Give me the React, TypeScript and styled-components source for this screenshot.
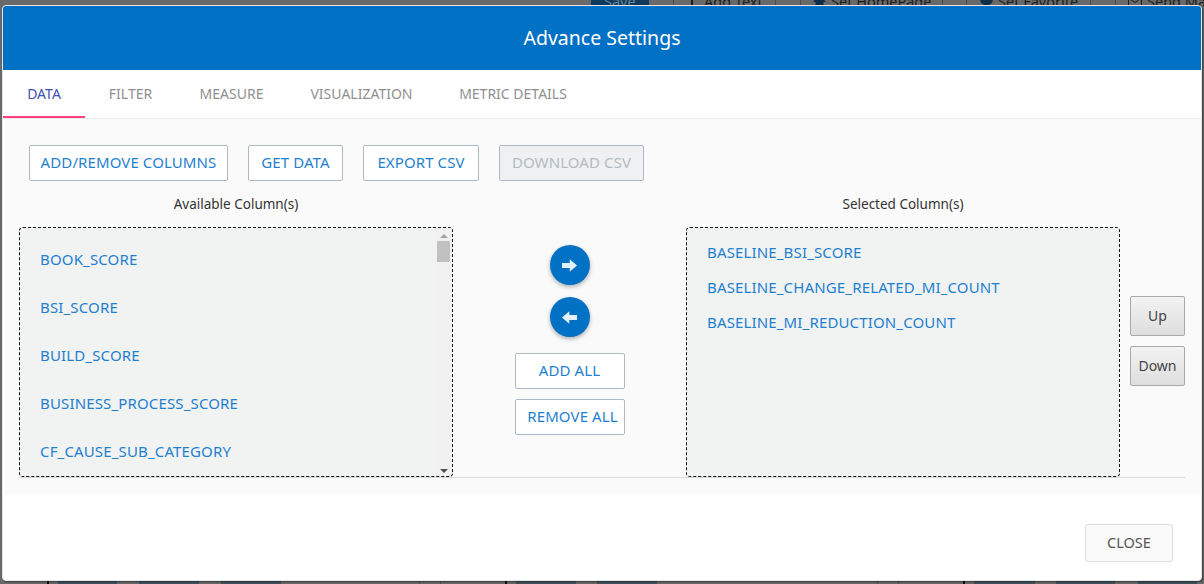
import React from "react";
import styled, { createGlobalStyle } from "styled-components";

const Global = createGlobalStyle`
  html, body { margin: 0; padding: 0; height: 100%; background: #696969; overflow: hidden; }
  * { box-sizing: border-box; }
  body { font-family: "Noto Sans", "Liberation Sans", sans-serif; }
`;

const Page = styled.div`
  position: relative;
  width: 1204px;
  height: 584px;
  overflow: hidden;
  background: #696969;
  display: flex;
  flex-direction: column;
  justify-content: space-between;
`;

const BehindTop = styled.div`
  height: 6px;
  overflow: hidden;
  display: flex;
  align-items: flex-end;
  padding-left: 591px;
  font-size: 14.5px;
  line-height: 16px;
  color: #1c1c1c;
`;

const BehindCell = styled.div<{ $w: number; $pad?: number; $dark?: boolean }>`
  flex: none;
  width: ${(p) => p.$w}px;
  height: 20px;
  margin-bottom: -5px;
  padding: 2px 0 0 ${(p) => p.$pad ?? 0}px;
  display: flex;
  align-items: flex-start;
  gap: 5px;
  white-space: nowrap;
  overflow: hidden;
  background: ${(p) => (p.$dark ? "#0f3a5f" : "transparent")};
  border-right: ${(p) => (p.$dark ? "0" : "1px solid #4a4a4a")};
  color: ${(p) => (p.$dark ? "#6b7f90" : "#1c1c1c")};

  svg {
    flex: none;
  }
`;

const BehindBottom = styled.div`
  height: 3px;
  display: flex;
  padding-left: 47px;
`;

const Block = styled.div<{ $w: number; $m: number; $c: string }>`
  flex: none;
  width: ${(p) => p.$w}px;
  margin-right: ${(p) => p.$m}px;
  background: ${(p) => p.$c};
`;

const Modal = styled.div`
  position: absolute;
  left: 2px;
  top: 5px;
  width: 1200px;
  height: 576px;
  background: #fff;
  border: 1px solid #e4e8ec;
  border-radius: 4px;
  box-shadow: 1px 1px 2px rgba(0, 0, 0, 0.45);
  display: flex;
  flex-direction: column;
  overflow: hidden;
`;

const Header = styled.header`
  flex: none;
  height: 64px;
  background: #0071c5;
  color: #fff;
  font-size: 19.5px;
  line-height: 64px;
  text-align: center;
`;

const Tabs = styled.nav`
  flex: none;
  height: 49px;
  display: flex;
  border-bottom: 1px solid #ececec;
`;

const Tab = styled.div<{ $active?: boolean; $w: number }>`
  flex: none;
  width: ${(p) => p.$w}px;
  height: 48px;
  padding-top: 1px;
  display: flex;
  align-items: center;
  justify-content: center;
  font-size: 14px;
  color: ${(p) => (p.$active ? "#3f51b5" : "#8f8f8f")};
  border-bottom: 2px solid ${(p) => (p.$active ? "#ff4081" : "transparent")};
`;

const Content = styled.section`
  flex: none;
  height: 375px;
  margin-left: 2px;
  padding: 26px 16px 0 14px;
  background: #fafafa;
`;

const ActionRow = styled.div`
  display: flex;
  gap: 20px;
  padding-left: 10px;
`;

const OutlineButton = styled.button<{ $w: number; $shift?: number }>`
  flex: none;
  width: ${(p) => p.$w}px;
  height: 36px;
  padding: 0 0 2px ${(p) => p.$shift ?? 0}px;
  background: #fff;
  border: 1px solid #adb9c4;
  border-radius: 2px;
  color: #1f7fcf;
  font: 15px/32px "Noto Sans", sans-serif;
  letter-spacing: 0.1px;
  white-space: nowrap;
  text-align: center;

  &:disabled {
    background: #eef0f2;
    color: #b3bcc0;
  }
`;

const Columns = styled.div`
  display: flex;
  margin-top: 14px;
  border-bottom: 1px solid #dcdcdc;
  height: 283px;
`;

const ListColumn = styled.div`
  flex: none;
  width: 434px;
  display: flex;
  flex-direction: column;
`;

const ColumnLabel = styled.div`
  height: 32px;
  text-align: center;
  font-size: 13.5px;
  line-height: 18px;
  color: #333;
`;

const ListBox = styled.div`
  height: 251px;
  display: flex;
  background: #f1f3f3;
  border: 1px dashed #111;
  border-radius: 4px;
  overflow: hidden;
`;

const Items = styled.ul<{ $pitch: number; $top: number }>`
  flex: 1;
  margin: 0;
  padding: ${(p) => p.$top}px 0 0 20px;
  list-style: none;
  display: flex;
  flex-direction: column;
  gap: ${(p) => p.$pitch - 20}px;
  overflow: hidden;
`;

const Item = styled.li`
  flex: none;
  height: 20px;
  font-size: 15px;
  letter-spacing: 0.15px;
  line-height: 20px;
  color: #1f7fcf;
`;

const Scrollbar = styled.div`
  flex: none;
  width: 15px;
  margin-right: 1px;
  background: #f1f1f1;
  display: flex;
  flex-direction: column;
  align-items: center;
  justify-content: space-between;
  padding: 6px 0 3px;
`;

const ScrollThumb = styled.div`
  width: 13px;
  height: 21px;
  margin-top: 3px;
  background: #c1c1c1;
`;

const ScrollTrack = styled.div`
  display: flex;
  flex-direction: column;
  align-items: center;
`;

const Arrow = styled.div<{ $down?: boolean }>`
  width: 0;
  height: 0;
  border-left: 4px solid transparent;
  border-right: 4px solid transparent;
  ${(p) => (p.$down ? "border-top: 4px solid #505050;" : "border-bottom: 4px solid #a3a3a3;")}
`;

const Middle = styled.div`
  flex: none;
  width: 233px;
  padding-top: 50px;
  display: flex;
  flex-direction: column;
  align-items: center;
`;

const Round = styled.button`
  flex: none;
  width: 40px;
  height: 40px;
  padding: 0;
  margin-bottom: 12px;
  border: 0;
  border-radius: 50%;
  background: #0071c5;
  box-shadow: 0 2px 4px rgba(0, 0, 0, 0.3);
  display: flex;
  align-items: center;
  justify-content: center;
`;

const MiddleButtons = styled.div`
  display: flex;
  flex-direction: column;
  gap: 10px;
  margin-top: 4px;
`;

const Order = styled.div`
  flex: none;
  width: 65px;
  padding: 101px 0 0 10px;
  display: flex;
  flex-direction: column;
  gap: 10px;
`;

const GreyButton = styled.button`
  width: 55px;
  height: 40px;
  padding: 0;
  background: linear-gradient(#f2f2f2, #dedede);
  border: 1px solid #a9a9a9;
  border-radius: 2px;
  color: #444;
  font: 14px/38px "Noto Sans", sans-serif;
`;

const Footer = styled.footer`
  flex: 1;
  display: flex;
  justify-content: flex-end;
  padding: 30px 28px 0 0;
`;

const CloseButton = styled.button`
  width: 88px;
  height: 38px;
  padding: 0 0 2px;
  background: #fafafa;
  border: 1px solid #dcdcdc;
  border-radius: 3px;
  color: #555;
  font: 14.5px/34px "Noto Sans", sans-serif;
`;

const ArrowIcon = ({ left }: { left?: boolean }) => (
  <svg width="15" height="13" viewBox="0 0 14 12" style={left ? { transform: "scaleX(-1)" } : undefined}>
    <path d="M0 3.6H7.2V.2L14 6 7.2 11.8V8.4H0Z" fill="#e3f1fd" />
  </svg>
);

const available = ["BOOK_SCORE", "BSI_SCORE", "BUILD_SCORE", "BUSINESS_PROCESS_SCORE", "CF_CAUSE_SUB_CATEGORY"];
const selected = ["BASELINE_BSI_SCORE", "BASELINE_CHANGE_RELATED_MI_COUNT", "BASELINE_MI_REDUCTION_COUNT"];

const bottomBlocks: [number, number, string][] = [
  [2, 9, "#111"], [59, 22, "#42525c"], [60, 22, "#42525c"], [60, 138, "#42525c"], [1, 20, "#555"], [1, 64, "#555"],
  [2, 9, "#111"], [60, 21, "#42525c"], [60, 220, "#42525c"], [1, 20, "#555"], [1, 64, "#555"],
  [2, 9, "#111"], [61, 21, "#42525c"], [59, 23, "#42525c"], [59, 0, "#42525c"],
];

export default function App() {
  return (
    <>
      <Global />
      <Page>
        <BehindTop>
          <BehindCell $w={58} $pad={13} $dark>Save</BehindCell>
          <BehindCell $w={25} />
          <BehindCell $w={102} $pad={17}>
            <svg width="8" height="14" viewBox="0 0 8 14"><rect width="2" height="14" fill="#1c1c1c" /></svg>
            Add Text
          </BehindCell>
          <BehindCell $w={25} />
          <BehindCell $w={142} $pad={12}>
            <svg width="13" height="14" viewBox="0 0 13 14"><path d="M0 9 6.5 2 13 9 10.5 9V14H2.5V9Z" fill="#0f2c48" /></svg>
            Set HomePage
          </BehindCell>
          <BehindCell $w={24} />
          <BehindCell $w={124} $pad={13}>
            <svg width="13" height="14" viewBox="0 0 13 14"><circle cx="6.5" cy="6" r="6.5" fill="#0f2c48" /></svg>
            Set Favorite
          </BehindCell>
          <BehindCell $w={25} />
          <BehindCell $w={89} $pad={12}>
            <svg width="14" height="14" viewBox="0 0 14 14"><path d="M.5 5h13v7.5H.5ZM.5 5 7 9.5 13.5 5" fill="none" stroke="#1c1c1c" /></svg>
            Send Mail
          </BehindCell>
        </BehindTop>
        <BehindBottom>
          {bottomBlocks.map(([w, m, c], i) => (
            <Block key={i} $w={w} $m={m} $c={c} />
          ))}
        </BehindBottom>
        <Modal>
          <Header>Advance Settings</Header>
          <Tabs>
            <Tab $active $w={82}>DATA</Tab>
            <Tab $w={91}>FILTER</Tab>
            <Tab $w={111}>MEASURE</Tab>
            <Tab $w={149}>VISUALIZATION</Tab>
            <Tab $w={154}>METRIC DETAILS</Tab>
          </Tabs>
          <Content>
            <ActionRow>
              <OutlineButton $w={199}>ADD/REMOVE COLUMNS</OutlineButton>
              <OutlineButton $w={95}>GET DATA</OutlineButton>
              <OutlineButton $w={116}>EXPORT CSV</OutlineButton>
              <OutlineButton $w={145} disabled>DOWNLOAD CSV</OutlineButton>
            </ActionRow>
            <Columns>
              <ListColumn>
                <ColumnLabel>Available Column(s)</ColumnLabel>
                <ListBox>
                  <Items $pitch={48} $top={21}>
                    {available.map((t) => <Item key={t}>{t}</Item>)}
                  </Items>
                  <Scrollbar>
                    <ScrollTrack>
                      <Arrow />
                      <ScrollThumb />
                    </ScrollTrack>
                    <Arrow $down />
                  </Scrollbar>
                </ListBox>
              </ListColumn>
              <Middle>
                <Round aria-label="Add"><ArrowIcon /></Round>
                <Round aria-label="Remove"><ArrowIcon left /></Round>
                <MiddleButtons>
                  <OutlineButton $w={110}>ADD ALL</OutlineButton>
                  <OutlineButton $w={110} $shift={6}>REMOVE ALL</OutlineButton>
                </MiddleButtons>
              </Middle>
              <ListColumn>
                <ColumnLabel>Selected Column(s)</ColumnLabel>
                <ListBox>
                  <Items $pitch={35} $top={14}>
                    {selected.map((t) => <Item key={t}>{t}</Item>)}
                  </Items>
                </ListBox>
              </ListColumn>
              <Order>
                <GreyButton>Up</GreyButton>
                <GreyButton>Down</GreyButton>
              </Order>
            </Columns>
          </Content>
          <Footer>
            <CloseButton>CLOSE</CloseButton>
          </Footer>
        </Modal>
      </Page>
    </>
  );
}
